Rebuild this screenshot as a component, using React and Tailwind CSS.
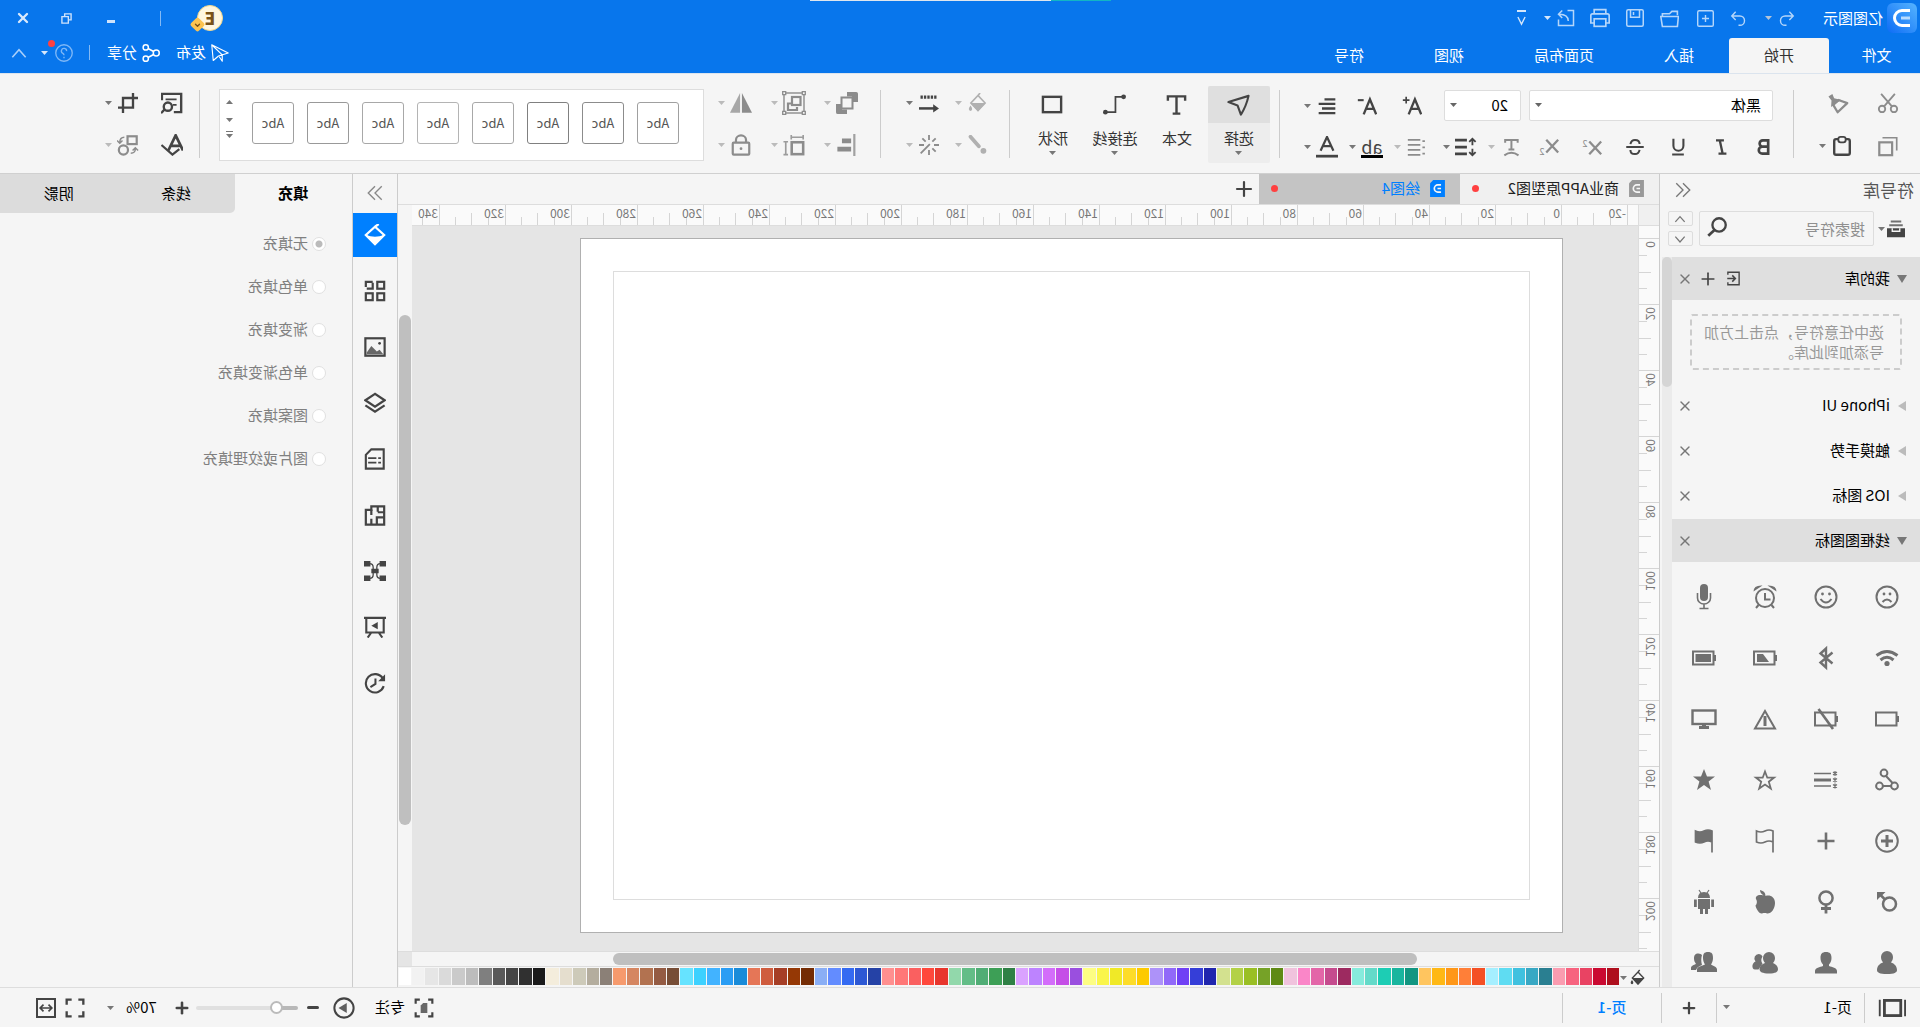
import { useState } from "react";
import { ChevronDown, Plus, X } from "lucide-react";

const MENU_TABS = ["开始", "插入", "页面布局", "视图", "符号"];

const FILL_OPTIONS = ["无填充", "单色填充", "渐变填充", "单色渐变填充", "图案填充", "图片或纹理填充"];

const STYLE_BORDERS = [
  "border-[#a0a0a0]",
  "border-[#8c8c8c]",
  "border-[#808080]",
  "border-[#a8a8a8]",
  "border-[#b4b4b4]",
  "border-[#a8a8a8]",
  "border-[#999999]",
  "border-[#a0a0a0]",
];

const PALETTE = [
  "#ae0f1d", "#ca0a31", "#e94363", "#f7637f", "#fa9cb0",
  "#2a7f91", "#38a8c4", "#40c1df", "#5fdcf2", "#a5efff",
  "#f45024", "#ff7f38", "#ff9718", "#ffb815", "#ffc55f",
  "#129681", "#19b59e", "#1dcdb4", "#64dac9", "#86ebdc",
  "#9d2a60", "#c54b8e", "#e366a8", "#fa86c8", "#f0c3dd",
  "#5f8a14", "#76a227", "#9abf24", "#b3d147", "#d3e18f",
  "#2026ae", "#353ed8", "#7040f5", "#9169f9", "#ad92f9",
  "#fdca00", "#fddc29", "#f0e927", "#faf54a", "#fdfd83",
  "#9a4fdf", "#c54ee7", "#d36dfa", "#bd83ff", "#daa2ff",
  "#2f8045", "#3d9f56", "#50ad75", "#63bd87", "#92d8ab",
  "#e8362d", "#ff483c", "#fa6060", "#ff7777", "#ff8f8f",
  "#2542a6", "#2d58d4", "#346af2", "#638cff", "#8aaef5",
  "#742c04", "#953805", "#a63e26", "#cf5c3e", "#e57657",
  "#198bd9", "#2a9df4", "#42b3ff", "#3dd1ff", "#66e3ff",
  "#774d36", "#945b43", "#b27250", "#d58661", "#f69a6d",
  "#8b8077", "#b4ad9e", "#cdcab9", "#e5dece", "#f4eddc",
  "#1a1a1a", "#303030", "#454545", "#595959", "#7f7f7f",
  "#bcbcbc", "#cacaca", "#dadada", "#e6e6e6", "#f2f2f2", "#ffffff",
];

const H_MARKS = Array.from({ length: 19 }, (_, i) => -20 + i * 20);
const V_MARKS = Array.from({ length: 11 }, (_, i) => i * 20);

function Svg({ children, className = "size-6", width = 2 }) {
  return (
    <svg
      viewBox="0 0 24 24"
      fill="none"
      stroke="currentColor"
      strokeWidth={width}
      className={`shrink-0 ${className}`}
      aria-hidden="true"
    >
      {children}
    </svg>
  );
}

const F = { fill: "currentColor", stroke: "none" };

const icons = {
  undo: <path d="M8 2.500 2.500 8.500 8 14M3 8.500h11a6.500 6.500 0 0 1 0 13h-2" />,
  redo: <path d="m16 2.500 5.500 6L16 14M21 8.500H10a6.500 6.500 0 0 0 0 13h2" />,
  newDoc: <><rect x="1" y="1" width="22" height="22" rx="2" /><path d="M12 7v10M7 12h10" /></>,
  folder: <><path d="M2 8V3h7l3 3h9v4" /><path d="M2 22 0.800 9.500H19l4 0-2 12.500H2z" /></>,
  save: <><rect x="1" y="1" width="22" height="22" rx="2" /><path d="M6 1v10h12V1M14 4v4" /></>,
  print: <><path d="M5 7V2h14v5M5 18H1V9q0-2 2-2h18q2 0 2 2v9h-4" /><rect x="5" y="13" width="14" height="9" /></>,
  exportDoc: <><path d="M10 2H2v20h20v-8" /><path d="M9 16q0-9 12-9M17 2l5 5-5 5" /></>,
  plane: <path d="M1 12 23 1l-2 21-7-6zM22 2 9 14.500V23l4-6" strokeLinejoin="round" />,
  share: <><circle cx="5" cy="12" r="4" /><circle cx="19" cy="4.500" r="3.500" /><circle cx="19" cy="19.500" r="3.500" /><path d="m8.500 10 7.500-4M8.500 14l7.500 4" /></>,
  help: <><circle cx="12" cy="12" r="11" /><path d="M8.500 9.500a3.500 3.500 0 1 1 5 3q-1.500 1-1.500 2.500M12 17v2" /></>,
  up: <path d="m4 17 8-9 8 9" />,
  down: <path d="m4 8 8 9 8-9" />,
  foldLeft: <path d="m12 3-9 9 9 9M21 3l-9 9 9 9" />,
  foldRight: <path d="m3 3 9 9-9 9M12 3l9 9-9 9" />,
  cut: <><circle cx="5.500" cy="18.500" r="3.500" /><circle cx="18.500" cy="18.500" r="3.500" /><path d="M7.500 16 19.500 2M16.500 16 4.500 2" /></>,
  copy: <><rect x="7.500" y="8" width="14" height="14" strokeWidth="2.400" /><path d="M2.500 17V3H18" strokeWidth="1.800" /></>,
  painter: <><path d="M2 11.500 12 8l6 5.500-5 8.500z" strokeWidth="2.600" strokeLinejoin="round" /><path {...F} d="m9 8 8-2 2-5 4.500 3-3.500 4.500.5 7.500z" /></>,
  paste: <><rect x="3.500" y="4.500" width="17" height="17" rx="2" strokeWidth="2.600" /><rect x="8" y="2" width="8" height="6" rx="2.500" fill="#f5f5f5" /></>,
  bold: <path strokeWidth="3.200" d="M7 4v16h7a4.200 4.200 0 0 0 0-8.500H7h6.500a3.700 3.700 0 0 0 0-7.500z" />,
  italic: <path d="M8.500 4H18M5.500 20H15M13.500 4l-3.500 16" strokeWidth="2.800" />,
  underline: <path d="M5.500 2v8.500a6 6 0 0 0 12 0V2M5 21h14" strokeWidth="2.500" />,
  strike: <path d="M17.500 8.500q-1-5-5.500-5-5.500 0-5.500 5M1.500 12h21M6.500 15.500q1 5 5.500 5 5.500 0 5.500-5" strokeWidth="2.400" />,
  sup: <><path d="m2 6 13 14M15 6 2 20" strokeWidth="2.500" /><text x="17" y="12" fontSize="10" {...F}>2</text></>,
  sub: <><path d="m2 4 13 14M15 4 2 18" strokeWidth="2.500" /><text x="17" y="21" fontSize="10" {...F}>2</text></>,
  curveText: <path d="M4 7V3.500h15V7M11.500 4v11M8 15h7M3 22q8.500-6 17 0" strokeWidth="2.400" />,
  lineSpace: <><path d="M11 4.500h13M11 12h13M11 19.500h13" strokeWidth="3" /><path d="M5 3v7M5 14v7M1.500 6.500 5 3l3.500 3.500M1.500 17.500 5 21l3.500-3.500" /></>,
  list: <path d="M8 3.500h15M8 9.500h15M8 15.500h15M8 21.500h15M2.500 5h3M2.500 12.500h3M2.500 20h3" />,
  growText: <><path d="M1 22 8.500 4 16 22M4 15.500h9" strokeWidth="2.800" /><path d="M19 1v8M15 5h8" /></>,
  shrinkText: <><path d="M1 22 8.500 4 16 22M4 15.500h9" strokeWidth="2.800" /><path d="M16 5h7" strokeWidth="2.500" /></>,
  alignText: <path d="M2 4h13M2 9.500h20M2 15h16M2 20.500h20" strokeWidth="2.800" />,
  fontColor: <><path d="M5 16 12 1l7 15M8 11h8" strokeWidth="2.400" /><path d="M0 22h24" strokeWidth="3" /></>,
  cursor: <path d="M1.500 3 22.500 9.500 13 13 9.500 22.500Q4 14 1.500 3z" strokeWidth="2.200" strokeLinejoin="round" />,
  textTool: <path d="M3 8V3.500h18V8M12 3.500V21M8 21.500h8" strokeWidth="2.500" />,
  connector: <><path d="M3 4h8v16h9" strokeWidth="1.800" /><circle cx="2.500" cy="4" r="2.500" {...F} /><circle cx="21.500" cy="20" r="2.500" {...F} /></>,
  shape: <rect x="3" y="4" width="19" height="16" strokeWidth="2.500" />,
  bucket: <><path d="M3.500 12 12 3l8.500 9-8.500 9zM12 3 9.500 0" /><path {...F} d="M3 12h18l-9 10z" /><path {...F} d="M21 15q4 5 0 6.500-4-1.500 0-6.500z" /></>,
  brush: <><path d="M21 2 11 13.500" strokeWidth="4.500" strokeLinecap="round" /><circle cx="5.500" cy="19" r="3.500" {...F} /></>,
  lineStyle: <><path d="M3 5h20" strokeWidth="4" strokeDasharray="2.800 1.300" /><path d="M24 18.500H5" strokeWidth="3" /><path {...F} d="m0 18.500 7-5v10z" /></>,
  wand: <path d="M12 0v6M12 18v6M0 12h6M18 12h6M4 4l4 4M16 8l4-4M4 20l4-4M11 11l11 11" strokeWidth="2.200" />,
  arrange: <><path {...F} d="M0 2q0-2 2-2h10v5H6.500v6H0zM24 22q0 2-2 2H12v-5h5.500v-6H24z" /><rect x="6" y="6" width="12" height="12" strokeWidth="2.200" /></>,
  group: <><rect x="2" y="2" width="20" height="20" strokeWidth="1.400" /><rect x="5.500" y="6" width="8.500" height="8" strokeWidth="2.200" /><path d="M14 12.500h4V19H9v-3" strokeWidth="2.200" /><path d="M.7.700h3v3h-3zM20.300.700h3v3h-3zM.7 20.300h3v3h-3zM20.300 20.300h3v3h-3z" fill="#f5f5f5" strokeWidth="1.300" /></>,
  flip: <><path {...F} d="M11 1v21.500H0z" /><path {...F} d="M13 1v21.500h11z" opacity=".75" /></>,
  alignObj: <><path d="M4 0v24" strokeWidth="2.400" opacity=".8" /><path {...F} d="M7.500 5h10v5h-10zM7.500 14h15v5h-15z" /></>,
  sizeObj: <><rect x="2" y="9" width="12.500" height="13" strokeWidth="2.800" /><path d="M1.500 3.500H15M2 1v5M15 1v5M21 8v15M18.500 8.500h5M18.500 22.500h5" strokeWidth="1.800" opacity=".85" /></>,
  lock: <><rect x="3" y="9.500" width="18" height="13" rx="1" strokeWidth="2.400" /><path d="M6.500 9V6.500a5.500 5 0 0 1 11 0V9" strokeWidth="2.400" /><circle cx="12" cy="16" r="1.500" {...F} /></>,
  searchDoc: <><path d="M23 9V2H2v20h8" strokeWidth="2.600" /><path d="M7 8h12M7 14h4" strokeWidth="1.800" /><circle cx="16.500" cy="16" r="4.500" strokeWidth="2.600" /><path d="m20 19 4 4" strokeWidth="2.600" /></>,
  crop: <path d="M6 0v17.500h18M0 6h18V24" strokeWidth="2.800" />,
  spell: <><path d="M0 18 8 1.500 16 18M3.500 13h9" strokeWidth="3" /><path d="m4 16.500 7.500 6L23.500 12" strokeWidth="2.400" /></>,
  replace: <><rect x="2.500" y="2.500" width="10" height="8.500" strokeWidth="2.400" /><circle cx="17" cy="17.500" r="5" strokeWidth="2.400" /><path d="M16 3.500q5 0 5 6M18 7l3 3 3-3M9 21q-5 0-5-5M1 18l3-3 3 3" strokeWidth="1.600" /></>,
  library: <><path d="M5 2h14M3 7h18" strokeWidth="2.600" opacity=".75" /><path {...F} d="M0 11h24v12H0z" /><path d="M7 11v4h10v-4" stroke="#f5f5f5" strokeWidth="1.800" /></>,
  search: <><circle cx="9.500" cy="9.500" r="8" strokeWidth="2.800" /><path d="m15 15.500 7.500 7" strokeWidth="3.200" /></>,
  importBox: <><path d="M21 6V2H3v20h18v-4" /><path d="M22 12H9M14 7l-5 5 5 5" strokeWidth="2.400" /></>,
  bucketLine: <><path d="M2 12 12 3l10 9-10 10zM12 3 8 0" /><path {...F} d="M2 12q10 4 20 0L12 23z" /></>,
  themes: <><rect x="2" y="2" width="7.500" height="7.500" /><path d="M14.500 2H22v7.500h-7.500z" strokeDasharray="13 3" /><rect x="2" y="14.500" width="7.500" height="7.500" /><rect x="14.500" y="14.500" width="7.500" height="7.500" /></>,
  image: <><rect x="1.500" y="2.500" width="21" height="19" /><path {...F} d="m3 20 4-5 3 2 6-6 5 7v2z" opacity=".8" /><circle cx="7" cy="8" r="1.500" {...F} /></>,
  layers: <path d="m12 2 10.500 7L12 16 1.500 9zM1.500 14.500l10.500 7 10.500-7" />,
  page: <><path d="M2.500 1.500H16l6 6v15H2.500z" strokeWidth="2.300" /><path d="M5.500 11h3M10.500 11h9M5.500 16h3M10.500 16h9" strokeWidth="2" /></>,
  floor: <><path d="M2 2.500h14v4h6v16H2z" strokeWidth="2.400" /><path d="M2 14.500h8V22M9 2.500v6M2 9h7M16 6v6M16 16v6" /></>,
  mind: <><path {...F} d="M0 1h7v6H0zM17 1h7v6h-7zM0 17h7v6H0zM17 17h7v6h-7zM8 9.500h8v5H8z" /><path d="M6 4q4 0 4 4v8q0 4-4 4M18 4q-4 0-4 4v8q0 4 4 4" strokeWidth="1.400" /></>,
  present: <><path d="M0 2h24M2.500 3v15h19V3M8 18l-4 5.500M16 18l4 5.500" strokeWidth="2.300" /><path {...F} d="m9 6.500 7 4-7 4z" /></>,
  history: <><path d="M2.500 15.500A10 10 0 1 0 3.500 7" strokeWidth="2.300" /><path {...F} d="M1 2.500v7.500h7.500z" /><path d="M11.500 7v6l5.500 3.500" strokeWidth="2.200" /></>,
  pages: <><rect x="4.500" y="5.500" width="14" height="13" strokeWidth="2.400" /><path d="M0.800 5v14M22.500 5v14" strokeWidth="1.600" /></>,
  focus: <><path d="M2 7V2h5M17 2h5v5M22 17v5h-5M7 22H2v-5" strokeWidth="2.600" /><path {...F} d="M8 6h5l3 3v9H8z" opacity=".8" /></>,
  play: <><circle cx="12" cy="12" r="10.500" strokeWidth="2.200" /><path {...F} d="m9 6.500 9 5.500-9 5.500z" opacity=".85" /></>,
  full: <path d="M2 8V2h6M16 2h6v6M22 16v6h-6M8 22H2v-6" strokeWidth="2.800" />,
  fit: <><rect x="1.200" y="1.200" width="21.600" height="21.600" strokeWidth="2.400" /><path d="M5 12h14M9 8l-4 4 4 4M15 8l4 4-4 4" /></>,
  doc: <><path {...F} d="M1.500 0H18l4.500 4.500V24h-21z" /><path d="M7 7h4.500a5 5 0 0 1 0 10H7M7 12h5" stroke="#f5f5f5" strokeWidth="2.400" /></>,
};

const battery = (
  <>
    <rect x="2.500" y="5.500" width="20.500" height="13" />
    <path {...F} d="M0 9h2v6H0z" />
  </>
);

const SYMBOLS = [
  ["难过", <><circle cx="12" cy="12" r="10.500" /><circle cx="9" cy="9" r="1.400" {...F} /><circle cx="15" cy="9" r="1.400" {...F} /><path d="M7.500 17q4.500-5 9 0" /></>],
  ["微笑", <><circle cx="12" cy="12" r="10.500" /><circle cx="8.500" cy="9" r="1.400" {...F} /><circle cx="15.500" cy="9" r="1.400" {...F} /><path d="M6.500 14q5.500 7 11 0" /></>],
  ["闹钟", <><circle cx="12" cy="13" r="9" /><path {...F} d="M.5 6.500q0-6.500 9-6zM23.500 6.500q0-6.500-9-6z" /><path d="M12 8v6.500H6.500M5.500 20 3 23M18.500 20l2.500 3" /></>],
  ["麦克风", <><rect x="8" y="-1" width="8" height="17" rx="4" {...F} /><path d="M5.500 8v5a6.500 6 0 0 0 13 0V8M12 19v4M7.500 23.500h9" strokeWidth="1.600" /></>],
  ["无线", <><path d="M1.500 9.500q10.500-8 21 0M5.500 14q6.500-5.500 13 0" strokeWidth="3" /><circle cx="12" cy="17.500" r="2.600" {...F} /></>],
  ["蓝牙", <path d="m5.500 6.500 12 10-5.500 5v-19l5.500 5-12 10" strokeWidth="2.400" />],
  ["半电", <>{battery}<path {...F} d="M20 8h-6l-6 8h12z" /></>],
  ["满电", <>{battery}<path {...F} d="M5 8h15.500v8H5z" /></>],
  ["空电", battery],
  ["无电池", <>{battery}<path d="M19.500 2 5 22" strokeWidth="2.600" /></>],
  ["警告", <><path d="M12 4 22 21.500H2z" /><path d="M12 9v10" strokeWidth="3" /></>],
  ["显示器", <><rect x="0.500" y="3.500" width="23" height="13.500" strokeWidth="2.400" /><path {...F} d="M10 17h4v2h3v3H7v-3h3z" /></>],
  ["分享", <><circle cx="15" cy="5" r="3.400" /><circle cx="19.500" cy="18" r="3.400" /><circle cx="4.500" cy="18" r="3.400" /><path d="M13 8 6.500 15M8 18h8" /></>],
  ["列表", <><path d="M7 5.500h17M7 18h17" strokeWidth="1.600" /><path d="M7 12h17" strokeWidth="3" /><path d="M3 3v5M1 4l4 3M5 4 1 7M3 9.500v5M1 10.500l4 3M5 10.500l-4 3M3 15.500v5M1 16.500l4 3M5 16.500l-4 3" strokeWidth="1.200" /></>],
  ["星形", <path d="m12 3.500 2.300 6.200h6.700l-5.200 4 2 6.800-5.800-4-5.800 4 2-6.800-5.200-4h6.700z" strokeWidth="1.800" />],
  ["实心星", <path {...F} d="m12 1 3 7.600h8l-6.400 5 2.400 8.400-7-5-7 5 2.400-8.400L1 8.600h8z" />],
  ["添加", <><circle cx="12" cy="12" r="10.800" /><path d="M12 6v12M6 12h12" strokeWidth="3" /></>],
  ["加号", <path d="M12 3.500v17M3.500 12h17" strokeWidth="2.600" />],
  ["旗帜", <path d="M4 23.500V2q4-2 8 0t8.500 0v11q-4.500 2-8.500 0t-8 0" strokeWidth="1.700" />],
  ["实心旗", <path fill="currentColor" d="M4 23.500V2q4-2 8 0t8.500 0v11q-4.500 2-8.500 0t-8 0" strokeWidth="1.700" />],
  ["男", <><circle cx="9.500" cy="14" r="6.500" strokeWidth="2.500" /><path d="m14 9.500 4.500-4.500" strokeWidth="2.500" /><path {...F} d="M13.500 2H22v8l-2.500-2.500-3.500-3z" /></>],
  ["女", <><circle cx="12" cy="8" r="6.600" strokeWidth="2.500" /><path d="M12 15v8.500M7 18.500h10" strokeWidth="2.800" /></>],
  ["苹果", <path {...F} d="M11.500 6C11.500 3 13 1 17 0c0 2.500-1.500 4-3.500 5.500C18.500 4 22 6 21 9c-1.500 2-1 5 .5 6.500-.5 3-3.500 8.500-6.500 8-2-.6-3.500-.6-5 0C6 24 2 19 2 13c0-6 5-8.500 9.500-7z" />],
  ["安卓", <><path {...F} d="M6 8q0-6 6-6t6 6zM6 9h12v10H6zM2 9.500h2.800V17H2zM19.200 9.500H22V17h-2.800zM8 19h3v5H8zM13 19h3v5h-3z" /><path d="M7 0l2 3M17 0l-2 3" strokeWidth="1.200" /></>],
  ["用户", <path {...F} d="M12 0a6 6 0 0 1 6 6c0 2.500-1 4-2 5.500 3.500 1 6 4 6 7.500 0 2.500-2.500 4-10 4S2 21.500 2 19c0-3.500 2.500-6.500 6-7.500C7 10 6 8.500 6 6a6 6 0 0 1 6-6z" />],
  ["职员", <path {...F} d="M12 1c4 0 5.500 2 5.500 6 0 3-1 5-2.500 6.500V15c3 1 8 2 8 5v2.500H1V20c0-3 5-4 8-5v-1.500C7.500 12 6.500 10 6.500 7c0-4 1.500-6 5.500-6z" />],
  ["好友", <><path {...F} d="M8 1a6 6 0 0 1 6 6c0 2-1 4-2 5 3 1 5.500 3 5.500 6 0 3-3 4.500-9.500 4.500S-1 21-1 18c0-3 2.500-5 5-6-1-1-2-3-2-5a6 6 0 0 1 6-6z" /><path {...F} d="M18 3a4.500 4.500 0 0 1 3.500 7.500c4 1.500 4 8 .5 8h-3.500l-4-6c2-3 1-5 0-7q1-2.500 3.500-2.500z" /></>],
  ["同事", <><path {...F} d="M8 1c4 0 5 2 5 6 0 3-1 5-2 6.500 3 1.500 8 2 8 5V21H-1v-2.500c0-3 4-3.500 6-5C4 12 3 10 3 7c0-4 1-6 5-6z" /><path {...F} d="M17.500 2.500c3.500 0 4.500 2 4.500 5 0 2.500-1 4-2 5.500 2 1 5 1.500 5 4v2h-5c-1-3-4-4-6-5 1-3 1-7 0-10q1-1.500 3.500-1.500z" /></>],
];

const RAIL = [
  ["填充", "bucketLine"],
  ["主题", "themes"],
  ["图片", "image"],
  ["图层", "layers"],
  ["页面", "page"],
  ["平面图", "floor"],
  ["脑图", "mind"],
  ["演示", "present"],
  ["历史", "history"],
];

function Caret({ className = "text-[#777]" }) {
  return (
    <svg viewBox="0 0 7 4" className={`w-[7px] h-1 shrink-0 ${className}`} fill="currentColor" aria-hidden="true">
      <path d="M0 0h7L3.500 4z" />
    </svg>
  );
}

function IconButton({ icon, label, className = "w-[26px] text-[#444]", size = "size-5" }) {
  return (
    <button aria-label={label} className={`flex shrink-0 items-center justify-center ${className}`}>
      <Svg className={size}>{icons[icon]}</Svg>
    </button>
  );
}

// icon with a drop-down arrow next to it
function SplitButton({ icon, label, className = "text-[#444]", caret = "text-[#777]", size = "size-5", children }) {
  return (
    <button aria-label={label} className={`flex w-10 shrink-0 items-center ${className}`}>
      <span className="flex w-[26px] justify-center">{children || <Svg className={size}>{icons[icon]}</Svg>}</span>
      <span className="flex w-3 justify-center">
        <Caret className={caret} />
      </span>
    </button>
  );
}

function Divider({ className = "mt-4 h-[68px] bg-[#ccc]" }) {
  return <div className={`w-px shrink-0 ${className}`} />;
}

function Header() {
  return (
    <header className="bg-[#0876ec] text-white">
      <div className="flex h-9 items-center justify-between">
        <div className="flex items-center">
          <svg viewBox="0 0 30 30" className="ml-[3px] size-[30px]" aria-hidden="true">
            <defs>
              <linearGradient id="logo" x1="0" y1="0" x2="1" y2="1">
                <stop offset="0" stopColor="#55b4ff" />
                <stop offset="1" stopColor="#0d6cf5" />
              </linearGradient>
            </defs>
            <rect width="30" height="30" rx="6" fill="url(#logo)" />
            <path d="M7 7.500h8a7.500 7.500 0 0 1 0 15H7" fill="none" stroke="#fff" strokeWidth="3" />
            <path d="M7 15h9" stroke="#b9dcff" strokeWidth="3" />
          </svg>
          <h1 className="ml-1 w-[60px] text-[15px] leading-5">亿图图示</h1>
          <div className="ml-[27px] flex items-center text-[#b5d6fa]">
            <IconButton icon="undo" label="撤销" className="w-[18px]" size="size-[17px]" />
            <button aria-label="撤销历史" className="flex w-[18px] justify-center">
              <Caret className="text-[#b5c4d6]" />
            </button>
            <IconButton icon="redo" label="重做" className="w-[42px]" size="size-[17px]" />
            <IconButton icon="newDoc" label="新建" className="w-6" size="size-[17px]" />
            <IconButton icon="folder" label="打开" className="w-12" size="size-[19px]" />
            <IconButton icon="save" label="保存" className="w-[22px]" size="size-[18px]" />
            <IconButton icon="print" label="打印" className="w-12" size="size-5" />
            <IconButton icon="exportDoc" label="导出" className="w-5" size="size-[18px]" />
            <button aria-label="导出选项" className="flex w-4 justify-center">
              <Caret className="text-[#d5e7fb]" />
            </button>
            <button aria-label="自定义快速访问" className="ml-3.5 flex flex-col items-center text-[#d5e7fb]">
              <span className="h-0.5 w-[9px] bg-current" />
              <svg viewBox="0 0 10 11" className="mt-1 h-[10px] w-[9px]" fill="none" stroke="currentColor" strokeWidth="1.500">
                <path d="m1 1 4 8 4-8" />
              </svg>
            </button>
          </div>
        </div>
        <div className="flex items-center pr-px">
          <button aria-label="账户" className="relative mr-9 size-[26px] rounded-full border border-[#f5d98b] bg-[#fff6e0] text-[17px] leading-6 font-black text-[#7a5218]">
            E
            <span className="absolute right-[-6px] bottom-0 flex size-[11px] rotate-45 items-center justify-center rounded-[2px] bg-[#fcc350]">
              <ChevronDown className="size-2 -rotate-45" strokeWidth={4} />
            </span>
          </button>
          <Divider className="mr-[27px] h-[15px] bg-[#84baf5]" />
          <button aria-label="最小化" className="flex h-9 w-11 items-center justify-center pt-1.5">
            <span className="h-[3px] w-2 bg-[#cfe3fb]" />
          </button>
          <button aria-label="还原" className="flex h-9 w-11 items-center justify-center text-[#cfe3fb]">
            <Svg className="size-[11px]" width={3}><path d="M8 8h14v14H8zM8 15H2V2h14v6" /></Svg>
          </button>
          <button aria-label="关闭" className="flex h-9 w-11 items-center justify-center text-[#d9e9fc]">
            <X className="size-4" strokeWidth={3.500} />
          </button>
        </div>
      </div>
      <div className="flex h-[37px] items-end justify-between text-[15px]">
        <nav className="flex">
          <button className="h-[35px] w-[91px] pr-1">文件</button>
          {MENU_TABS.map((t, i) => (
            <button key={t} className={`h-[35px] px-[35px] ${i === 0 ? "rounded-t-[3px] bg-[#f5f5f5] text-[#333]" : ""}`}>
              {t}
            </button>
          ))}
        </nav>
        <div className="flex h-full items-center pr-[9px] pb-1">
          <button className="flex items-center gap-[5px]">
            <Svg className="size-[18px]" width={1.500}>{icons.plane}</Svg>发布
          </button>
          <button className="ml-4 flex items-center gap-[5px]">
            <Svg className="size-[18px]">{icons.share}</Svg>分享
          </button>
          <Divider className="ml-[17px] h-[15px] bg-[#84baf5]" />
          <button aria-label="帮助" className="relative ml-4 flex items-center gap-[7px] text-[#7fb8f7]">
            <Svg className="size-[18px]" width={1.800}>{icons.help}</Svg>
            <Caret className="text-[#d5e7fb]" />
            <span className="absolute -top-1 left-[18px] size-[7px] rounded-full bg-[#ff4040]" />
          </button>
          <button aria-label="收起功能区" className="ml-3">
            <Svg className="size-5 text-[#a9cffa]" width={1.900}>{icons.up}</Svg>
          </button>
        </div>
      </div>
    </header>
  );
}

function BigButton({ icon, label, menu, active }) {
  return (
    <button className={`mt-3 flex h-[77px] w-[62px] flex-col items-center rounded-[2px] text-[15px] leading-5 text-[#444] ${active ? "bg-[#ededed]" : ""}`}>
      <span className={`flex h-[37px] w-full items-center justify-center rounded-t-[2px] ${active ? "bg-[#dfdfdf]" : ""}`}>
        <Svg className="size-[23px]">{icons[icon]}</Svg>
      </span>
      <span className="mt-[5px] text-[#333]">{label}</span>
      {menu && <span className="mt-[3px] flex"><Caret /></span>}
    </button>
  );
}

const off = "text-[#8c8c8c]";
const offCaret = "text-[#bbb]";

function Toolbar() {
  return (
    <div className="flex h-[101px] shrink-0 border-t border-b border-t-[#dbe4ee] border-b-[#d0d0d0]">
      <div className="flex w-[126px] shrink-0 flex-col gap-[13px] pt-3.5 pl-5">
        <div className="flex h-[30px] gap-[25px]">
          <IconButton icon="cut" label="剪切" className={`w-6 ${off}`} size="size-[22px]" />
          <IconButton icon="painter" label="格式刷" className={`w-6 ${off}`} size="size-[21px]" />
        </div>
        <div className="flex h-[30px] gap-[21px]">
          <IconButton icon="copy" label="复制" className={`w-6 ${off}`} size="size-[22px]" />
          <SplitButton icon="paste" label="粘贴" size="size-[22px]" />
        </div>
      </div>
      <Divider />
      <div className="w-[513px] shrink-0 pt-4">
        <div className="flex h-[31px] pl-5 text-[15px] text-black">
          <div className="relative">
            <select aria-label="字体" className="h-full w-[244px] appearance-none rounded-[2px] border border-[#ddd] bg-white pl-[11px]">
              <option>黑体</option>
            </select>
            <span className="pointer-events-none absolute top-[13px] right-1.5 flex"><Caret className="text-[#666]" /></span>
          </div>
          <div className="relative ml-2">
            <select aria-label="字号" className="h-full w-[77px] appearance-none rounded-[2px] border border-[#ddd] bg-white pl-3">
              <option>20</option>
            </select>
            <span className="pointer-events-none absolute top-[13px] right-1.5 flex"><Caret className="text-[#666]" /></span>
          </div>
          <IconButton icon="growText" label="增大字号" className="ml-[19px] w-[26px] text-[#444]" />
          <IconButton icon="shrinkText" label="减小字号" className="mr-[14px] ml-[19px] w-[26px] text-[#444]" />
          <SplitButton icon="alignText" label="对齐" />
        </div>
        <div className="mt-2.5 flex h-8 pl-[7px]">
          <IconButton icon="bold" label="加粗" className="w-[43px] text-[#444]" />
          <IconButton icon="italic" label="斜体" className="w-[43px] text-[#444]" />
          <IconButton icon="underline" label="下划线" className="w-[43px] text-[#444]" />
          <IconButton icon="strike" label="删除线" className="w-[43px] text-[#444]" />
          <IconButton icon="sup" label="上标" className={`w-[43px] ${off}`} size="size-[22px] overflow-visible" />
          <IconButton icon="sub" label="下标" className={`w-[43px] ${off}`} size="size-[22px] overflow-visible" />
          <div className="ml-1 flex gap-[5px]">
            <SplitButton icon="curveText" label="弯曲文字" className={off} caret={offCaret} />
            <SplitButton icon="lineSpace" label="行距" size="size-[22px]" />
          </div>
          <div className="ml-[9px] flex gap-[5px]">
            <SplitButton icon="list" label="列表" className={off} caret={offCaret} />
            <SplitButton label="突出显示">
              <span className="h-[21px] w-[22px] border-b-[3px] border-black text-lg leading-[18px]">ab</span>
            </SplitButton>
            <SplitButton icon="fontColor" label="字体颜色" size="size-[22px]" />
          </div>
        </div>
      </div>
      <Divider />
      <div className="flex shrink-0 pr-3 pl-[9px]">
        <BigButton icon="cursor" label="选择" menu active />
        <BigButton icon="textTool" label="文本" />
        <BigButton icon="connector" label="连接线" menu />
        <BigButton icon="shape" label="形状" menu />
      </div>
      <Divider />
      <div className="flex shrink-0 flex-col gap-3 pt-3.5 pr-[21px] pl-[18px]">
        <div className="flex h-[30px] gap-[9px]">
          <SplitButton icon="bucket" label="填充" className="text-[#b0b0b0]" caret={offCaret} />
          <SplitButton icon="lineStyle" label="线型" />
        </div>
        <div className="flex h-[30px] gap-[9px]">
          <SplitButton icon="brush" label="线条颜色" className="text-[#b0b0b0]" caret={offCaret} />
          <SplitButton icon="wand" label="效果" className={off} caret={offCaret} />
        </div>
      </div>
      <Divider />
      <div className="flex shrink-0 flex-col gap-3 pt-3.5 pr-2.5 pl-5">
        <div className="flex h-[30px] gap-[13px]">
          <SplitButton icon="arrange" label="排列" className={off} caret={offCaret} size="size-[22px]" />
          <SplitButton icon="group" label="组合" className={off} caret={offCaret} size="size-6" />
          <SplitButton icon="flip" label="翻转" className={off} caret={offCaret} size="size-[22px]" />
        </div>
        <div className="flex h-[30px] gap-[13px]">
          <SplitButton icon="alignObj" label="对齐形状" className={off} caret={offCaret} size="size-[22px]" />
          <SplitButton icon="sizeObj" label="大小" className={off} caret={offCaret} size="size-[22px]" />
          <SplitButton icon="lock" label="锁定" className={off} caret={offCaret} size="size-[22px]" />
        </div>
      </div>
      <div className="mt-[15px] mr-[19px] flex h-[72px] w-[485px] shrink-0 items-start gap-[13px] border border-[#ddd] bg-white pt-3 pl-6">
        {STYLE_BORDERS.map((b, i) => (
          <button key={i} className={`size-[42px] shrink-0 rounded-[3px] border ${b} text-[13px] text-[#555]`}>
            Abc
          </button>
        ))}
        <div className="-mt-3 ml-1.5 flex h-full flex-col items-center justify-between py-2.5">
          <button aria-label="上一行" className="flex rotate-180"><Caret /></button>
          <button aria-label="下一行" className="flex pt-1"><Caret /></button>
          <button aria-label="更多样式" className="flex flex-col items-center gap-0.5">
            <span className="h-px w-[7px] bg-[#777]" />
            <Caret />
          </button>
        </div>
      </div>
      <Divider />
      <div className="flex shrink-0 flex-col gap-3 pt-3.5 pl-3.5">
        <div className="flex h-[30px] gap-[18px]">
          <IconButton icon="searchDoc" label="查找" size="size-[22px]" />
          <SplitButton icon="crop" label="裁剪" />
        </div>
        <div className="flex h-[30px] gap-[18px]">
          <IconButton icon="spell" label="拼写检查" size="size-[22px]" />
          <SplitButton icon="replace" label="替换形状" className={off} caret={offCaret} size="size-[22px]" />
        </div>
      </div>
    </div>
  );
}

function LibraryRow({ name, open, own }) {
  return (
    <div className={`flex items-center pr-[5px] pl-[13px] text-[15px] text-black ${open ? "h-[43px] bg-[#dfdfdf]" : "h-[45px] pb-0.5"}`}>
      <button className="flex flex-1 items-center text-left">
        <svg viewBox="0 0 10 10" className={`size-[10px] ${open ? "text-[#777]" : "text-[#bbb]"}`} fill="currentColor" aria-hidden="true">
          <path d={open ? "M0 1h10L5 9z" : "M1 0l8 5-8 5z"} />
        </svg>
        <span className="ml-[7px]">{name}</span>
      </button>
      {own && (
        <>
          <button aria-label="导入" className="mr-2"><Svg className="size-[15px] text-[#444]" width={2.200}>{icons.importBox}</Svg></button>
          <button aria-label="新增" className="mr-[5px]"><Plus className="size-5 text-[#444]" strokeWidth={2} /></button>
        </>
      )}
      <button aria-label={`关闭${name}`}><X className="size-4 text-[#777]" strokeWidth={2} /></button>
    </div>
  );
}

function SymbolPanel() {
  return (
    <aside className="flex w-[261px] shrink-0 flex-col border-r border-[#ccc]">
      <div className="flex h-[31px] shrink-0 items-center justify-between pr-3.5 pl-1.5">
        <h2 className="text-[17px] leading-8 text-[#555]">符号库</h2>
        <button aria-label="收起符号库"><Svg className="size-[18px] text-[#777]" width={1.800}>{icons.foldLeft}</Svg></button>
      </div>
      <div className="mt-1.5 mb-[11px] flex h-[35px] shrink-0 items-center">
        <button aria-label="符号库" className="ml-[15px] flex items-center gap-0.5 text-[#444]">
          <Svg className="size-[18px]">{icons.library}</Svg>
          <Caret />
        </button>
        <div className="relative ml-1 h-full">
          <input aria-label="搜索符号" placeholder="搜索符号" className="h-full w-[175px] rounded-[2px] border border-[#ddd] bg-transparent pr-9 pl-2 text-[15px] placeholder:text-[#8f8f8f]" />
          <Svg className="absolute top-1.5 right-2 size-5 text-[#444]">{icons.search}</Svg>
        </div>
        <div className="ml-1.5 flex h-full flex-col justify-between text-[#777]">
          <button aria-label="上一个" className="flex h-[15px] w-[25px] items-center justify-center rounded-[2px] border border-[#ddd]">
            <Svg className="size-3.5" width={2.200}>{icons.up}</Svg>
          </button>
          <button aria-label="下一个" className="flex h-[15px] w-[25px] items-center justify-center rounded-[2px] border border-[#ddd]">
            <Svg className="size-3.5" width={2.200}>{icons.down}</Svg>
          </button>
        </div>
      </div>
      <div className="flex min-h-0 flex-1">
        <div className="flex-1 overflow-hidden">
          <LibraryRow name="我的库" open own />
          <div className="mx-[18px] my-3.5 h-[56px] rounded-[3px] pt-2 pl-[18px] text-[15px] leading-5 text-[#999] outline-2 -outline-offset-2 outline-[#ccc] outline-dashed">
            选中任意符号，点击上方加
            <br />
            号添加到此库。
          </div>
          <LibraryRow name="iPhone UI" />
          <LibraryRow name="触摸手势" />
          <LibraryRow name="IOS 图标" />
          <LibraryRow name="线框图图标" open />
          <div className="grid w-[246px] auto-rows-[61px] grid-cols-4 pt-1 pl-0.5 text-[#707070]">
            {SYMBOLS.map(([name, art]) => (
              <button key={name} aria-label={name} className="flex items-center justify-center">
                <Svg className="size-6 overflow-visible">{art}</Svg>
              </button>
            ))}
          </div>
        </div>
        <div className="mr-0.5 w-2.5 bg-[#ebebeb]">
          <div className="h-[130px] rounded-full bg-[#d5d5d5]" />
        </div>
      </div>
    </aside>
  );
}

function DocTab({ name, active, className }) {
  return (
    <button className={`flex items-center pb-px pl-3.5 text-[15px] ${active ? "bg-[#c4c4c4] text-[#007fff]" : "bg-[#f0f0f0] text-[#222]"} ${className}`}>
      <Svg className={`size-[17px] ${active ? "" : "text-[#999]"}`}>{icons.doc}</Svg>
      <span className="ml-[9px] flex-1 text-left whitespace-nowrap">{name}</span>
      <span className="mr-3 size-[7px] rounded-full bg-[#ff4040]" />
    </button>
  );
}

function HorizontalRuler() {
  return (
    <div className="flex h-[21px] flex-1 overflow-hidden border-b border-[#ddd] bg-[#fafafa] pl-2.5 text-xs leading-[15px] text-[#777]">
      {H_MARKS.map((m) => (
        <div key={m} className="relative flex w-[66px] shrink-0 items-end border-l border-[#d5d5d5]">
          <span className="absolute top-0 left-px">{m}</span>
          <span className="w-4" />
          <span className="h-2 w-[17px] border-l border-[#d5d5d5]" />
          <span className="h-3 w-4 border-l border-[#d5d5d5]" />
          <span className="h-2 w-4 border-l border-[#d5d5d5]" />
        </div>
      ))}
    </div>
  );
}

function VerticalRuler() {
  return (
    <div className="w-[21px] shrink-0 overflow-hidden border-r border-[#ddd] bg-[#fafafa] pt-3 text-xs leading-4 text-[#777]">
      {V_MARKS.map((m) => (
        <div key={m} className="relative flex h-[66px] flex-col items-end border-t border-[#d5d5d5]">
          <span className="absolute top-0.5 left-0 rotate-180 [writing-mode:vertical-rl]">{m}</span>
          <span className="h-4" />
          <span className="h-[17px] w-2 border-t border-[#d5d5d5]" />
          <span className="h-4 w-3 border-t border-[#d5d5d5]" />
          <span className="h-4 w-2 border-t border-[#d5d5d5]" />
        </div>
      ))}
    </div>
  );
}

function Workspace() {
  return (
    <main className="flex min-w-0 flex-1 flex-col">
      <div className="flex h-[31px] shrink-0 border-b border-[#ddd]">
        <DocTab name="商业APP原型图2" className="w-[199px]" />
        <DocTab name="绘图4" active className="w-[201px]" />
        <button aria-label="新建页签" className="ml-[3px]"><Plus className="size-6 text-[#444]" strokeWidth={2.200} /></button>
      </div>
      <div className="flex min-h-0 flex-1">
        <div className="flex min-w-0 flex-1 flex-col">
          <div className="flex shrink-0">
            <div className="w-[21px] border-r border-b border-[#ddd] bg-[#f0f0f0]" />
            <HorizontalRuler />
          </div>
          <div className="flex min-h-0 flex-1">
            <VerticalRuler />
            <div className="min-w-0 flex-1 overflow-hidden bg-[#e5e5e5] pt-3 pl-[75px]">
              <div className="h-[695px] w-[983px] border border-[#b0b0b0] bg-white p-8">
                <div className="h-full border border-[#ddd]" />
              </div>
            </div>
          </div>
        </div>
        <div className="w-3.5 shrink-0 px-px pt-[110px]">
          <div className="h-[510px] rounded-full bg-[#bfbfbf]" />
        </div>
      </div>
      <div className="flex h-[15px] shrink-0 border-t border-[#ddd]">
        <div className="min-w-0 flex-1 pt-px pr-[201px] pl-[242px]">
          <div className="h-3 rounded-full bg-[#bfbfbf]" />
        </div>
        <div className="w-3.5 bg-[#e5e5e5]" />
      </div>
      <div className="flex h-[21px] shrink-0 border-t border-[#ddd] pt-px">
        <button aria-label="填充颜色" className="flex w-10 items-center gap-[3px] pl-[13px] text-[#444]">
          <Svg className="size-4 overflow-visible">{icons.bucket}</Svg>
          <Caret />
        </button>
        <div className="flex h-[17px] flex-1 gap-px">
          {PALETTE.map((c) => (
            <button key={c} aria-label={c} className="flex-1" style={{ background: c }} />
          ))}
        </div>
      </div>
    </main>
  );
}

function ToolRail() {
  return (
    <div className="flex w-[46px] shrink-0 flex-col border-r border-l border-[#ccc]">
      <button aria-label="收起面板" className="flex h-[39px] items-center justify-center pb-0.5">
        <Svg className="size-[18px] text-[#888]" width={1.800}>{icons.foldRight}</Svg>
      </button>
      <div className="flex flex-col gap-3">
        {RAIL.map(([name, icon], i) => (
          <button key={name} aria-label={name} className={`flex h-11 items-center justify-center ${i === 0 ? "bg-[#0080ff] text-white" : "pb-px text-[#444]"}`}>
            <Svg className="size-[22px]" width={2.400}>{icons[icon]}</Svg>
          </button>
        ))}
      </div>
    </div>
  );
}

function FormatPanel() {
  const [fill, setFill] = useState(FILL_OPTIONS[0]);

  return (
    <aside className="w-[352px] shrink-0 text-[15px]">
      <div className="flex h-[39px] text-black">
        <button className="flex-1 font-bold">填充</button>
        <button className="flex-1 rounded-bl-[5px] bg-[#dcdcdc]">线条</button>
        <button className="flex-1 bg-[#dcdcdc]">阴影</button>
      </div>
      <div className="flex flex-col pt-[9px] pl-[26px] text-[#808080]">
        {FILL_OPTIONS.map((o) => (
          <label key={o} className="flex h-[43px] items-center gap-1">
            <input
              type="radio"
              name="fill"
              checked={fill === o}
              onChange={() => setFill(o)}
              className="size-3.5 appearance-none rounded-full border border-[#e0e0e0] bg-white checked:bg-[radial-gradient(circle,#bbb_3px,#fff_4px)]"
            />
            {o}
          </label>
        ))}
      </div>
    </aside>
  );
}

function StatusBar() {
  return (
    <footer className="flex h-10 shrink-0 items-center justify-between border-t border-[#ddd] text-[15px] text-black">
      <div className="flex items-center">
        <IconButton icon="pages" label="页面缩略图" className="w-[55px] text-[#444]" size="size-7" />
        <Divider className="h-[30px] bg-[#ccc]" />
        <div className="relative">
          <select aria-label="页面" className="w-[147px] appearance-none bg-transparent pl-3">
            <option>页-1</option>
          </select>
          <span className="pointer-events-none absolute top-[9px] right-1.5 flex"><Caret /></span>
        </div>
        <Divider className="h-[30px] bg-[#ccc]" />
        <button aria-label="添加页面" className="flex w-[54px] justify-center">
          <Plus className="size-[18px] text-[#444]" strokeWidth={3} />
        </button>
        <Divider className="h-[30px] bg-[#ccc]" />
        <button className="w-[98px] font-medium text-[#007fff]">页-1</button>
        <Divider className="h-[30px] bg-[#ccc]" />
      </div>
      <div className="flex items-center pr-9 text-[#444]">
        <button className="flex items-center gap-[9px] text-black">
          <Svg className="size-5 text-[#444]">{icons.focus}</Svg>专注
        </button>
        <IconButton icon="play" label="播放" className="ml-5 w-[22px]" size="size-[22px]" />
        <button aria-label="缩小" className="ml-3.5 flex w-3 items-center"><span className="h-[3px] w-3 rounded bg-[#444]" /></button>
        <input
          type="range"
          aria-label="缩放"
          defaultValue={17}
          className="mx-[9px] h-1 w-[102px] appearance-none rounded-full bg-[linear-gradient(to_right,#b8b8b8_20%,#e0e0e0_20%)] [&::-webkit-slider-thumb]:size-[13px] [&::-webkit-slider-thumb]:appearance-none [&::-webkit-slider-thumb]:rounded-full [&::-webkit-slider-thumb]:border-2 [&::-webkit-slider-thumb]:border-[#bbb] [&::-webkit-slider-thumb]:bg-white"
        />
        <button aria-label="放大" className="-ml-1"><Plus className="size-[18px]" strokeWidth={3.400} /></button>
        <button className="ml-4 flex items-center gap-3 text-black">
          <span className="w-[31px]">70%</span>
          <Caret />
        </button>
        <IconButton icon="full" label="全屏" className="ml-[22px] w-[20px]" />
        <IconButton icon="fit" label="适应宽度" className="ml-[9px] w-[20px]" />
      </div>
    </footer>
  );
}

export default function App() {
  return (
    <div className="relative flex h-screen -scale-x-100 flex-col overflow-hidden bg-[#f5f5f5] font-['Noto_Sans_CJK_SC','Noto_Sans',sans-serif]">
      <div className="absolute top-0 left-[809px] flex h-px">
        <span className="w-[60px] bg-[#12b5c4]" />
        <span className="w-[241px] bg-[#dfe6ee]" />
      </div>
      <Header />
      <Toolbar />
      <div className="flex min-h-0 flex-1">
        <SymbolPanel />
        <Workspace />
        <ToolRail />
        <FormatPanel />
      </div>
      <StatusBar />
    </div>
  );
}
